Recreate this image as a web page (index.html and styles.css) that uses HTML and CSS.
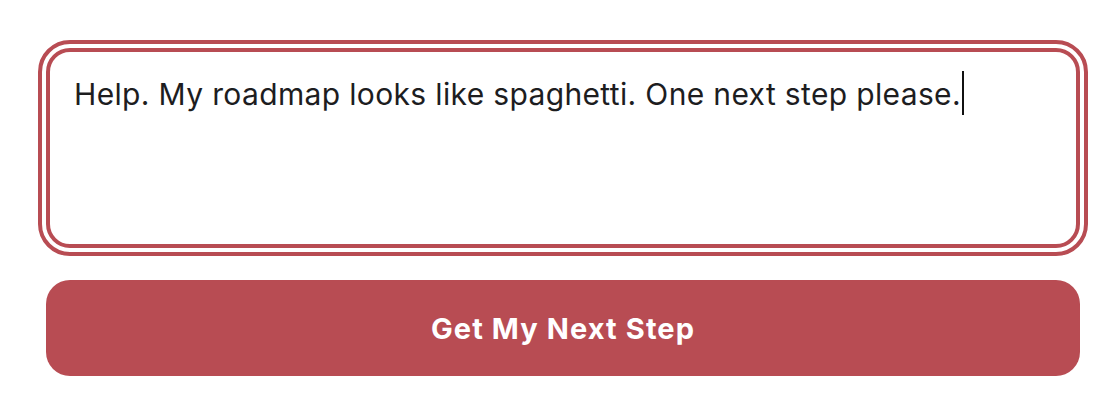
FILE: index.html
```html
<!DOCTYPE html>
<html lang="en">
<head>
<meta charset="utf-8">
<title>Next Step</title>
<link rel="stylesheet" href="styles.css">
</head>
<body>
<main class="panel">
  <div class="prompt" role="textbox" aria-multiline="true">Help. My roadmap looks like spaghetti. One next step please.<span class="caret"></span></div>
  <button class="submit" type="button">Get My Next Step</button>
</main>
</body>
</html>
```
FILE: styles.css
```css
html, body {
  margin: 0;
  padding: 0;
  background: #ffffff;
}

body {
  font-family: Inter, "Noto Sans", "Liberation Sans", sans-serif;
}

.panel {
  display: flex;
  flex-direction: column;
  gap: 32px;
  width: 1034px;
  padding: 48px 0 0 46px;
}

.prompt {
  box-sizing: border-box;
  height: 200px;
  border: 4px solid #b84c53;
  border-radius: 24px;
  outline: 4px solid #b84c53;
  outline-offset: 4px;
  padding: 19px 24px;
  font-size: 30px;
  line-height: 39px;
  color: #1d1d1f;
  letter-spacing: 0.35px;
}

.caret {
  display: inline-block;
  width: 2px;
  height: 44px;
  margin-left: 1px;
  background: #111111;
  vertical-align: -10px;
}

.submit {
  height: 96px;
  border: none;
  border-radius: 24px;
  background: #b84c53;
  color: #ffffff;
  font-family: Inter, "Noto Sans", "Liberation Sans", sans-serif;
  font-size: 29px;
  font-weight: 700;
  letter-spacing: 1.1px;
  cursor: pointer;
}
```
